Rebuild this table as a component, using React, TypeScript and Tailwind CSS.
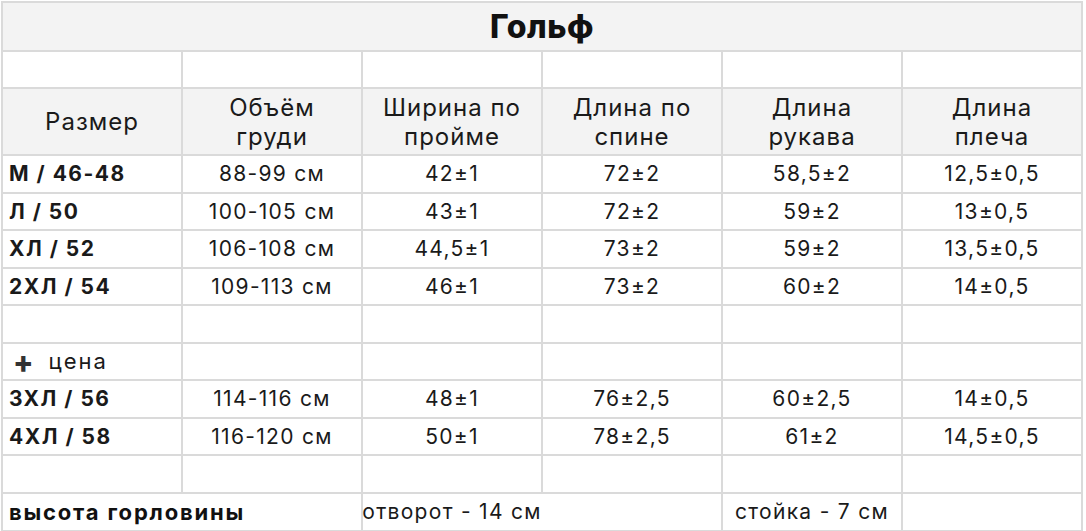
const FONT = { fontFamily: 'Inter, "Open Sans", sans-serif' }

const HEAD = ['Размер', 'Объём\nгруди', 'Ширина по\nпройме', 'Длина по\nспине', 'Длина\nрукава', 'Длина\nплеча']

const MAIN = [
  ['М / 46-48', '88-99 см', '42±1', '72±2', '58,5±2', '12,5±0,5'],
  ['Л / 50', '100-105 см', '43±1', '72±2', '59±2', '13±0,5'],
  ['ХЛ / 52', '106-108 см', '44,5±1', '73±2', '59±2', '13,5±0,5'],
  ['2ХЛ / 54', '109-113 см', '46±1', '73±2', '60±2', '14±0,5'],
]

const EXTRA = [
  ['3ХЛ / 56', '114-116 см', '48±1', '76±2,5', '60±2,5', '14±0,5'],
  ['4ХЛ / 58', '116-120 см', '50±1', '78±2,5', '61±2', '14,5±0,5'],
]

function Cell({ children, bold, left }: { children?: React.ReactNode; bold?: boolean; left?: boolean }) {
  return (
    <div className={`bg-white flex items-center whitespace-nowrap text-[21px] text-[#1a1a1a] ${left ? 'justify-start pl-[6px]' : 'justify-center'} ${bold ? 'font-bold tracking-[1.5px]' : 'tracking-[1.3px]'}`}>
      {children}
    </div>
  )
}

function SizeRow({ row }: { row: string[] }) {
  return (
    <>
      {row.map((v, i) => (
        <Cell key={i} bold={i === 0} left={i === 0}>{v}</Cell>
      ))}
    </>
  )
}

function EmptyRow() {
  return (
    <>
      {[0, 1, 2, 3, 4, 5].map(i => <div key={i} className="bg-white" />)}
    </>
  )
}

export default function App() {
  return (
    <div className="w-[1086px] h-[531px] bg-white" style={FONT}>
      <div className="ml-[1px] mt-[1px] w-[1082px] grid grid-cols-[repeat(6,178px)] grid-rows-[47px_35px_65px_36px_35px_36px_35px_36px_35px_36px_35px_36px_36px] gap-[2px] p-[2px] bg-[#dadada]">
        {/* Title */}
        <div className="col-span-6 bg-[#f3f3f3] flex items-center justify-center text-[32px] font-extrabold tracking-[0.5px] text-[#111]">
          Гольф
        </div>

        <EmptyRow />

        {/* Header */}
        {HEAD.map((h, i) => (
          <div key={i} className="bg-[#f3f3f3] flex items-center justify-center text-center whitespace-pre-line text-[24px] leading-[29px] tracking-[1px] text-[#1a1a1a]">
            {h}
          </div>
        ))}

        {MAIN.map((r, i) => <SizeRow key={i} row={r} />)}

        <EmptyRow />

        {/* Price note */}
        <div className="bg-white flex items-center pl-[10px] gap-[15px] text-[#1a1a1a]">
          <span className="font-extrabold text-[30px] leading-none text-[#333]">+</span>
          <span className="text-[22px] tracking-[2px]">цена</span>
        </div>
        {[0, 1, 2, 3, 4].map(i => <div key={i} className="bg-white" />)}

        {EXTRA.map((r, i) => <SizeRow key={i} row={r} />)}

        <EmptyRow />

        {/* Neck height */}
        <div className="col-span-2 bg-white flex items-center pl-[6px] text-[22px] font-bold tracking-[1.8px] text-[#111] whitespace-nowrap">
          высота горловины
        </div>
        <div className="col-span-2 bg-white flex items-center">
          <div className="w-[178px] flex justify-center whitespace-nowrap text-[21px] tracking-[1.3px] text-[#1a1a1a]">отворот - 14 см</div>
        </div>
        <Cell>стойка - 7 см</Cell>
        <div className="bg-white" />
      </div>
    </div>
  )
}
